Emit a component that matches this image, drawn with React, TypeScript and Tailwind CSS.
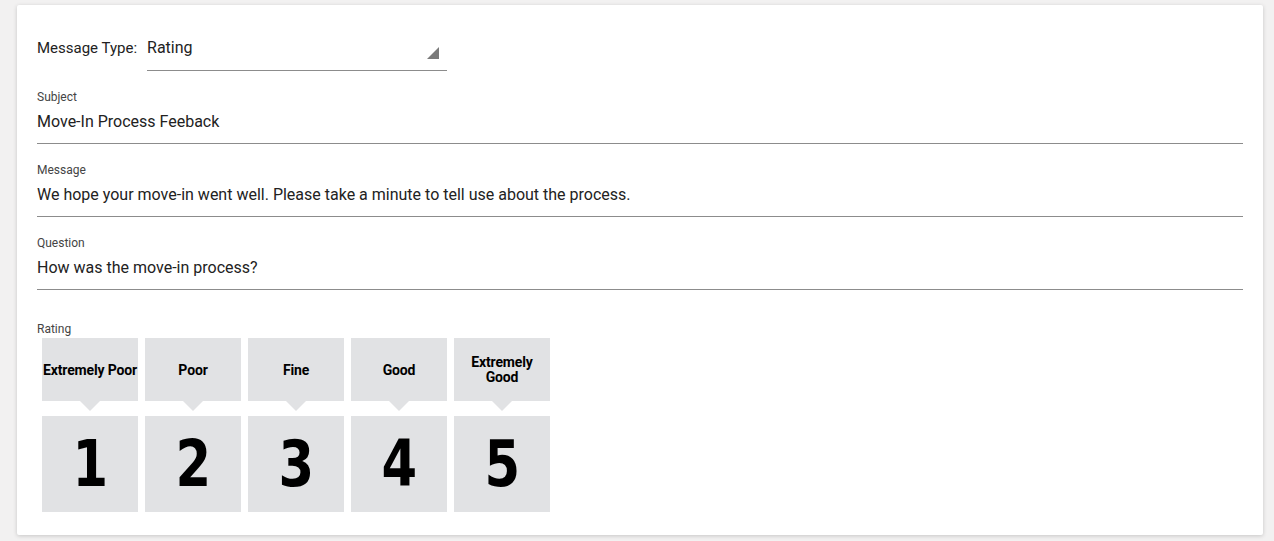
import React from 'react';

const ratings = [
  { label: 'Extremely Poor', value: 1 },
  { label: 'Poor', value: 2 },
  { label: 'Fine', value: 3 },
  { label: 'Good', value: 4 },
  { label: 'Extremely Good', value: 5 },
];

const fields = [
  { label: 'Subject', value: 'Move-In Process Feeback' },
  { label: 'Message', value: 'We hope your move-in went well. Please take a minute to tell use about the process.' },
  { label: 'Question', value: 'How was the move-in process?' },
];

const App: React.FC = () => {
  return (
    <div className="min-h-[541px] bg-[#f2f1f1] pt-[5px] pb-[6px] font-['Roboto',sans-serif]">
      <div className="ml-[17px] mr-[11px] bg-white rounded-[2px] shadow-[0_1px_4px_rgba(0,0,0,0.18)] px-[20px] pt-[25px] pb-[23px]">
        {/* Message type select */}
        <div className="flex items-start">
          <span className="pt-[6px] text-[15px] leading-[24px] text-[#222] mr-[10px]">Message Type:</span>
          <div className="relative w-[300px] h-[41px] border-b border-[#8c8c8c] pt-[6px]">
            <span className="text-[16px] leading-[24px] text-[#222]">Rating</span>
            <svg className="absolute right-[8px] top-[17px]" width="12" height="12" viewBox="0 0 12 12">
              <polygon points="12,0 12,12 0,12" fill="#7a7a7a" />
            </svg>
          </div>
        </div>

        {/* Text fields */}
        {fields.map((f) => (
          <div key={f.label} className="mt-[18px] border-b border-[#8c8c8c] pb-[9px]">
            <div className="text-[12px] leading-[16px] text-[#444]">{f.label}</div>
            <div className="mt-[5px] text-[16px] leading-[24px] text-[#222]">{f.value}</div>
          </div>
        ))}

        {/* Rating */}
        <div className="mt-[31px] text-[12px] leading-[16px] text-[#444]">Rating</div>
        <div className="mt-[1px] ml-[5px] flex gap-[7px]">
          {ratings.map((r) => (
            <div key={r.value} className="w-[96px] flex flex-col items-center">
              <div className="w-[96px] h-[63px] bg-[#e1e2e4] flex items-center justify-center text-center text-[14px] leading-[15px] font-bold text-black tracking-[-0.15px] pt-[1px]">
                <span className={r.label === 'Extremely Poor' ? 'whitespace-nowrap' : ''}>{r.label}</span>
              </div>
              <div className="w-0 h-0 border-l-[10px] border-r-[10px] border-t-[10px] border-l-transparent border-r-transparent border-t-[#e1e2e4]" />
              <div className="mt-[5px] w-[96px] h-[96px] bg-[#e1e2e4] flex items-center justify-center font-['DejaVu_Sans',sans-serif] font-bold text-[64px] leading-none text-black">
                <span className="inline-block scale-x-[0.8]">{r.value}</span>
              </div>
            </div>
          ))}
        </div>
      </div>
    </div>
  );
};

export default App;
